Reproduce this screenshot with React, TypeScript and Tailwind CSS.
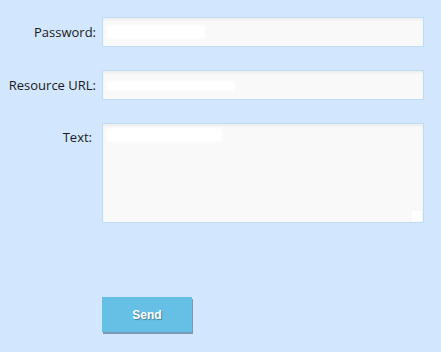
export default function App() {
  const label = "w-[96px] shrink-0 text-right text-[13px] text-[#1a1a1a] leading-[30px]";
  const box =
    "flex-1 border border-[#bfdcf6] bg-[#f9f9f9] shadow-[inset_0_2px_3px_rgba(0,0,0,0.05)]";
  return (
    <div
      className="w-[441px] h-[352px] bg-[#d2e7fd] pt-[17px] pr-[17px]"
      style={{ fontFamily: '"Open Sans", "Noto Sans", sans-serif' }}
    >
      <div className="flex flex-col gap-[23px]">
        <div className="flex gap-[6px] h-[30px]">
          <div className={label}>Password:</div>
          <div className={box + " flex items-center pl-[4px]"}>
            <div className="w-[98px] h-[14px] bg-white rounded-[3px] blur-[1px]" />
          </div>
        </div>
        <div className="flex gap-[6px] h-[30px]">
          <div className={label}>Resource URL:</div>
          <div className={box + " flex items-center pl-[4px]"}>
            <div className="w-[128px] h-[10px] mt-[2px] bg-white rounded-[3px] blur-[1px]" />
          </div>
        </div>
        <div className="flex gap-[6px] h-[100px]">
          <div className={label + " pr-[4px]"} style={{ lineHeight: "28px" }}>Text:</div>
          <div className={box + " pl-[4px] pt-[4px] flex flex-col justify-between"}>
            <div className="w-[115px] h-[14px] bg-white rounded-[3px] blur-[1px]" />
            <div className="self-end w-[10px] h-[10px] bg-white mb-[1px] mr-[1px]" />
          </div>
        </div>
      </div>
      <div className="pl-[102px] mt-[74px]">
        <button className="w-[90px] h-[35px] bg-[#66bfe5] text-white font-bold text-[12px] shadow-[1px_2px_0_#7c9ab5] [text-shadow:1px_1px_1px_rgba(0,0,0,0.35)]" style={{ fontFamily: '"Liberation Sans", Arial, sans-serif' }}>
          Send
        </button>
      </div>
    </div>
  );
}
